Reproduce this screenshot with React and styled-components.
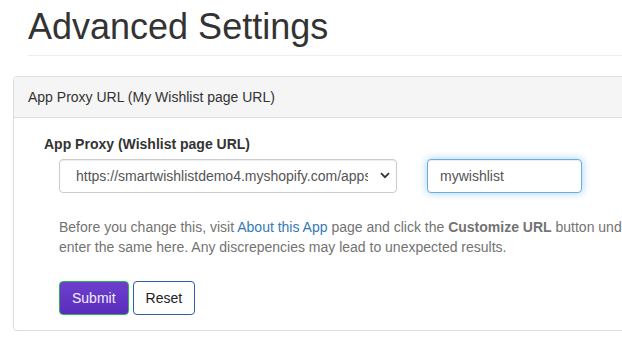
import React from 'react';
import styled, { createGlobalStyle } from 'styled-components';

const GlobalStyle = createGlobalStyle`
  html, body {
    margin: 0;
    padding: 0;
    overflow: hidden;
    background: #fff;
  }
  body {
    font-family: "Liberation Sans", Arial, sans-serif;
    font-size: 14px;
    line-height: 20px;
    color: #333;
  }
  * { box-sizing: border-box; }
`;

const Page = styled.div`
  width: 760px;
  padding: 7px 0 0 13px;
`;

const Header = styled.div`
  margin-left: 15px;
  padding-bottom: 8px;
  border-bottom: 1px solid #eee;
  margin-bottom: 20px;
`;

const Title = styled.h1`
  margin: 0;
  font-size: 36px;
  line-height: 40px;
  font-weight: 400;
  color: #333;
`;

const Panel = styled.section`
  border: 1px solid #ddd;
  border-radius: 4px;
  box-shadow: 0 1px 1px rgba(0, 0, 0, 0.05);
  overflow: hidden;
`;

const PanelHeading = styled.div`
  background: #f5f5f5;
  border-bottom: 1px solid #ddd;
  padding: 10px 14px;
  color: #333;
`;

const PanelBody = styled.div`
  padding: 16px 15px 15px 30px;
`;

const Label = styled.label`
  display: block;
  font-weight: 700;
  margin-bottom: 5px;
`;

const Row = styled.div`
  display: flex;
  gap: 30px;
  padding-left: 15px;
`;

const SelectWrap = styled.div`
  position: relative;
  width: 338px;
`;

const Select = styled.select`
  appearance: none;
  width: 100%;
  height: 34px;
  padding: 6px 28px 6px 16px;
  font: inherit;
  color: #555;
  background: #fff;
  border: 1px solid #ccc;
  border-radius: 4px;
  box-shadow: inset 0 1px 1px rgba(0, 0, 0, 0.075);
  outline: none;
`;

const Chevron = styled.svg`
  position: absolute;
  right: 7px;
  top: 13px;
  pointer-events: none;
`;

const Input = styled.input`
  width: 155px;
  height: 34px;
  padding: 6px 12px;
  font: inherit;
  color: #555;
  border: 1px solid #66afe9;
  border-radius: 4px;
  outline: none;
  box-shadow: inset 0 1px 1px rgba(0, 0, 0, 0.075), 0 0 8px rgba(102, 175, 233, 0.6);
`;

const Help = styled.p`
  margin: 24px 0 24px 15px;
  color: #737373;
  white-space: nowrap;
`;

const Link = styled.a`
  color: #337ab7;
  text-decoration: none;
`;

const Actions = styled.div`
  display: flex;
  gap: 4px;
  padding-left: 15px;
`;

const Button = styled.button`
  height: 34px;
  padding: 6px 12px;
  font: inherit;
  border-radius: 4px;
  cursor: pointer;
  color: ${(p) => (p.$primary ? '#f3efff' : '#222')};
  background: ${(p) => (p.$primary ? 'linear-gradient(#6c3fcb, #5b2dbd)' : '#fff')};
  border: 1px solid ${(p) => (p.$primary ? '#2bb54e' : '#2f5ea8')};
`;

export default function App() {
  return (
    <>
      <GlobalStyle />
      <Page>
        <Header>
          <Title>Advanced Settings</Title>
        </Header>
        <Panel>
          <PanelHeading>App Proxy URL (My Wishlist page URL)</PanelHeading>
          <PanelBody>
            <Label>App Proxy (Wishlist page URL)</Label>
            <Row>
              <SelectWrap>
                <Select defaultValue="apps">
                  <option value="apps">https://smartwishlistdemo4.myshopify.com/apps</option>
                </Select>
                <Chevron width="10" height="7" viewBox="0 0 10 7">
                  <path d="M1 1.2 L5 5.2 L9 1.2" fill="none" stroke="#333" strokeWidth="1.8" />
                </Chevron>
              </SelectWrap>
              <Input defaultValue="mywishlist" />
            </Row>
            <Help>
              Before you change this, visit <Link href="#">About this App</Link> page and click the{' '}
              <b>Customize URL</b> button under App Proxy and
              <br />
              enter the same here. Any discrepencies may lead to unexpected results.
            </Help>
            <Actions>
              <Button $primary>Submit</Button>
              <Button>Reset</Button>
            </Actions>
          </PanelBody>
        </Panel>
      </Page>
    </>
  );
}
